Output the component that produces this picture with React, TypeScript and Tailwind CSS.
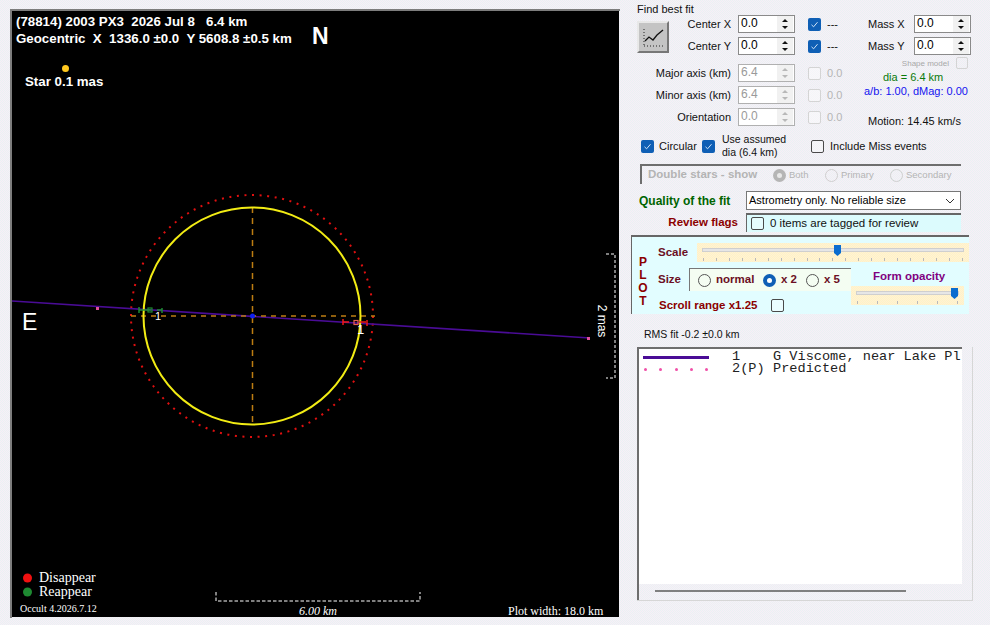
import type { ReactNode } from "react";

const SANS = "font-['Liberation_Sans',Arial,sans-serif]";
const SERIF = "font-['Liberation_Serif','Times_New_Roman',serif]";
const MONO = "font-['Liberation_Mono','Courier_New',monospace]";

function Check({ checked, disabled }: { checked?: boolean; disabled?: boolean }) {
  if (checked) {
    return (
      <span className="flex h-[13px] w-[13px] shrink-0 items-center justify-center rounded-[2px] bg-[#0f5fb5]">
        <svg width="9" height="9" viewBox="0 0 9 9" fill="none">
          <path d="M1.5 4.8 3.6 6.8 7.5 2.2" stroke="#cfe3f7" strokeWidth="1" />
        </svg>
      </span>
    );
  }
  return (
    <span
      className={`block h-[13px] w-[13px] shrink-0 rounded-[2px] border ${
        disabled ? "border-[#d4d4d4] bg-white/40" : "border-[#4a4a4a] bg-white/30"
      }`}
    />
  );
}

function Radio({ checked, disabled }: { checked?: boolean; disabled?: boolean }) {
  if (checked) {
    return (
      <span
        className={`flex h-[13px] w-[13px] shrink-0 items-center justify-center rounded-full ${
          disabled ? "bg-[#b5b5b5]" : "bg-[#0f5fb5]"
        }`}
      >
        <span className={`block h-[5px] w-[5px] rounded-full ${disabled ? "bg-[#e8e8e8]" : "bg-white"}`} />
      </span>
    );
  }
  return (
    <span
      className={`block h-[13px] w-[13px] shrink-0 rounded-full border ${
        disabled ? "border-[#cfcfcf]" : "border-[#555]"
      }`}
    />
  );
}

function Spin({ value, disabled }: { value: string; disabled?: boolean }) {
  const arrow = disabled ? "#b8b8b8" : "#111";
  return (
    <div
      className={`flex h-[18px] w-[57px] shrink-0 items-center justify-between border bg-white ${
        disabled ? "border-[#b0b0b0] bg-transparent text-[#9a9a9a]" : "border-[#8a8a8a] text-black"
      }`}
    >
      <span className="pb-[2px] pl-[2px] text-[12px] leading-none">{value}</span>
      <svg width="16" height="16" viewBox="0 0 16 16" className="mr-px">
        <rect x="0" y="0" width="16" height="8" fill="#f1f1f1" />
        <rect x="0" y="8" width="16" height="8" fill="#f1f1f1" />
        <path d="M5 6 8 3l3 3z" fill={arrow} />
        <path d="M5 10l3 3 3-3z" fill={arrow} />
      </svg>
    </div>
  );
}

function FitRow({ label, width, disabled, value, note }: { label: string; width: string; disabled?: boolean; value: string; note: string }) {
  return (
    <div className="flex h-[18px] items-center">
      <span className={`${width} whitespace-nowrap text-right`}>{label}</span>
      <span className="ml-[7px]">
        <Spin value={value} disabled={disabled} />
      </span>
      <span className="ml-[13px]">
        <Check checked={!disabled} disabled={disabled} />
      </span>
      <span className={`ml-[6px] ${disabled ? "text-[#b5b5b5]" : ""}`}>{note}</span>
    </div>
  );
}

function Slider({ pos, ticks, className }: { pos: string; ticks: number; className: string }) {
  return (
    <div className={`relative shrink-0 bg-[repeating-conic-gradient(#fff4c4_0_25%,#fff0d6_0_50%)] bg-[length:2px_2px] ${className}`}>
      <div className="absolute inset-x-[5px] top-[5px] h-[4px] border border-[#cfcfcf] bg-[#e6e6e6]" />
      <div className="absolute inset-x-[6px] bottom-[1px] flex justify-between">
        {Array.from({ length: ticks }).map((_, i) => (
          <span key={i} className="block h-[3px] w-px bg-[#b9b9b9]" />
        ))}
      </div>
      <svg width="7" height="11" viewBox="0 0 7 11" className={`absolute top-[2px] ${pos}`}>
        <path d="M0 0h7v8L3.5 11 0 8z" fill="#0a6ccf" />
      </svg>
    </div>
  );
}

function Label({ className, children }: { className: string; children: ReactNode }) {
  return <span className={`absolute whitespace-pre ${className}`}>{children}</span>;
}

function Plot() {
  return (
    <div className="mt-[9px] ml-[10px] h-[609px] w-[610px] shrink-0 border-t-2 border-l-2 border-[#7d7d7d]">
      <div className={`relative h-[606px] w-[607px] overflow-hidden bg-black text-white ${SANS}`}>
        <svg className="absolute inset-0" width="607" height="606" viewBox="12 11 607 606" fill="none">
          <circle cx="252" cy="316" r="121" stroke="#e01010" strokeWidth="2" strokeDasharray="2 5.6" />
          <line x1="12" y1="301" x2="590" y2="338" stroke="#4a0c96" strokeWidth="1.6" />
          <rect x="96" y="307" width="3" height="3" fill="#e0509a" />
          <rect x="587" y="337" width="3" height="3" fill="#e0509a" />
          <line x1="131" y1="316" x2="375" y2="316" stroke="#bd7d12" strokeWidth="1.5" strokeDasharray="5 5" />
          <line x1="252.5" y1="207" x2="252.5" y2="425" stroke="#bd7d12" strokeWidth="1.5" strokeDasharray="6 5" />
          <circle cx="252" cy="316" r="108.5" stroke="#f2ec14" strokeWidth="2" />
          <circle cx="252.5" cy="316" r="2.5" fill="#1020f0" />
          <circle cx="65.5" cy="68.5" r="3.5" fill="#ffc81e" />
          {/* green reappear marker */}
          <path d="M139 307v6M139 310h12M157 310h5M162 308v5" stroke="#1e8a32" strokeWidth="1.5" />
          <rect x="148" y="308" width="4" height="4" stroke="#1e8a32" strokeWidth="1.2" />
          {/* red disappear marker */}
          <path d="M343 319v6M343 322h6M359 322h7M367 320v6" stroke="#f01818" strokeWidth="1.5" />
          <rect x="354" y="320.5" width="4" height="4" stroke="#e86050" strokeWidth="1.2" />
          {/* 2 mas bracket */}
          <path d="M606 254h9v124h-9" stroke="#fff" strokeWidth="1" strokeDasharray="3 2" />
          {/* scale bar */}
          <path d="M216 592v9h204v-9" stroke="#fff" strokeWidth="1" strokeDasharray="3.5 2" />
          <circle cx="27.5" cy="578" r="4.5" fill="#f01010" />
          <circle cx="27.5" cy="592" r="4.5" fill="#1e8a32" />
        </svg>
        <div className="absolute top-[2px] left-[4px] text-[13.3px] leading-[17px] font-bold whitespace-pre">
          <div>(78814) 2003 PX3  2026 Jul 8   6.4 km</div>
          <div>Geocentric  X  1336.0 ±0.0  Y 5608.8 ±0.5 km</div>
        </div>
        <Label className="top-[12px] left-[300px] text-[23px] leading-[26px] font-bold">N</Label>
        <Label className="top-[63px] left-[13px] text-[13.3px] leading-[16px] font-bold">Star 0.1 mas</Label>
        <Label className="top-[298px] left-[10px] text-[23px] leading-[26px]">E</Label>
        <Label className="top-[299px] left-[143px] text-[11px] leading-[13px]">1</Label>
        <Label className="top-[312px] left-[345px] text-[13px] leading-[14px]">1</Label>
        <Label className="top-[303px] left-[574px] rotate-90 text-[12px] leading-[14px]">2 mas</Label>
        <Label className={`top-[559px] left-[27px] text-[14px] leading-[16px] ${SERIF}`}>Disappear</Label>
        <Label className={`top-[573px] left-[27px] text-[14px] leading-[16px] ${SERIF}`}>Reappear</Label>
        <Label className={`top-[592px] left-[8px] text-[10px] leading-[12px] ${SERIF}`}>Occult 4.2026.7.12</Label>
        <Label className={`top-[593px] left-[287px] text-[12px] leading-[14px] italic ${SERIF}`}>6.00 km</Label>
        <Label className={`top-[593px] left-[496px] text-[12px] leading-[14px] ${SERIF}`}>Plot width: 18.0 km</Label>
      </div>
    </div>
  );
}

function FitPanel() {
  return (
    <div className="flex h-[160px] flex-col pl-[6px] text-[11px] leading-[13px] text-[#111]">
      <div className="h-[15px] pt-[3px] leading-[12px]">Find best fit</div>
      <div className="flex">
        <div className="flex w-[224px] flex-col">
          <div className="flex">
            <div className="mt-[6px] flex h-[32px] w-[32px] shrink-0 items-center justify-center border-2 border-t-[#e8e8e8] border-r-[#777] border-b-[#777] border-l-[#e8e8e8] bg-[#c4c4c4]">
              <svg width="26" height="24" viewBox="0 0 26 24" fill="none">
                <path d="M4 4v17M4 21h20" stroke="#222" strokeDasharray="1 2" />
                <path d="M5 16l4-4 4 3 4-5 6-5" stroke="#111" strokeWidth="1.3" />
              </svg>
            </div>
            <div className="flex flex-col gap-[4px]">
              <FitRow label="Center X" width="w-[62px]" value="0.0" note="---" />
              <FitRow label="Center Y" width="w-[62px]" value="0.0" note="---" />
            </div>
          </div>
          <div className="mt-[9px] flex flex-col gap-[4px]">
            <FitRow label="Major axis (km)" width="w-[94px]" value="6.4" note="0.0" disabled />
            <FitRow label="Minor axis (km)" width="w-[94px]" value="6.4" note="0.0" disabled />
            <FitRow label="Orientation" width="w-[94px]" value="0.0" note="0.0" disabled />
          </div>
        </div>
        <div className="flex w-[110px] flex-col">
          <div className="flex flex-col gap-[4px] pl-[7px]">
            <div className="flex h-[18px] items-center justify-between">
              <span>Mass X</span>
              <Spin value="0.0" />
            </div>
            <div className="flex h-[18px] items-center justify-between">
              <span>Mass Y</span>
              <Spin value="0.0" />
            </div>
          </div>
          <div className="mt-[2px] flex h-[12px] items-center justify-end pr-[3px]">
            <span className="mr-[7px] text-[8px] text-[#a8a8a8]">Shape model</span>
            <span className="block h-[12px] w-[12px] rounded-[2px] border border-[#d4d4d4]" />
          </div>
          <div className="mt-[2px] pl-[22px] text-[#0a7a0a]">dia = 6.4 km</div>
          <div className="mt-px pl-[3px] text-[#1414f0]">a/b: 1.00, dMag: 0.00</div>
          <div className="mt-[17px] pl-[7px]">Motion: 14.45 km/s</div>
        </div>
      </div>
      <div className="mt-[5px] flex h-[26px] items-center pl-[4px]">
        <Check checked />
        <span className="ml-[5px] w-[43px]">Circular</span>
        <Check checked />
        <span className="ml-[7px] w-[89px] text-[10.5px] leading-[13px]">
          Use assumed
          <br />
          dia (6.4 km)
        </span>
        <Check />
        <span className="ml-[6px]">Include Miss events</span>
      </div>
    </div>
  );
}

function DoubleStars() {
  const opts = [
    { label: "Both", checked: true, w: "w-[52px]" },
    { label: "Primary", checked: false, w: "w-[65px]" },
    { label: "Secondary", checked: false, w: "" },
  ];
  return (
    <div className="mt-[4px] ml-[9px] flex h-[20px] w-[321px] items-center border-t-2 border-l-2 border-[#6e6e6e] pl-[6px] text-[#b4b4b4]">
      <span className="w-[125px] text-[11.5px] font-bold">Double stars - show</span>
      {opts.map((o) => (
        <span key={o.label} className={`flex items-center gap-[3px] text-[9.5px] ${o.w}`}>
          <Radio checked={o.checked} disabled />
          {o.label}
        </span>
      ))}
    </div>
  );
}

function PlotPanel() {
  return (
    <div className="mt-[3px] flex h-[79px] w-[338px] border-t-2 border-l border-[#666] bg-[#e2fdff] pt-[6px] font-bold">
      <div className="mt-[13px] w-[26px] pl-[5px] text-center text-[12px] leading-[13px] text-[#8b0000]">
        <div className="w-[12px]">P</div>
        <div className="w-[12px]">L</div>
        <div className="w-[12px]">O</div>
        <div className="w-[12px]">T</div>
      </div>
      <div className="flex flex-1 flex-col">
        <div className="flex items-center">
          <span className="w-[39px] text-[11.5px] text-[#6b0f24]">Scale</span>
          <Slider pos="left-[137px]" ticks={21} className="h-[19px] w-[272px]" />
        </div>
        <div className="flex">
          <div className="flex flex-col">
            <div className="mt-[6px] flex h-[23px] items-center">
              <span className="w-[31px] text-[11.5px] text-[#6b0f24]">Size</span>
              <div className="flex h-[23px] w-[162px] items-center border-t border-l border-[#777] bg-[#f4fdf2] pl-[8px] text-[11.5px] text-[#6b0f24]">
                <Radio />
                <span className="ml-[5px] w-[47px]">normal</span>
                <Radio checked />
                <span className="ml-[5px] w-[25px]">x 2</span>
                <Radio />
                <span className="ml-[5px]">x 5</span>
              </div>
            </div>
            <div className="mt-[6px] flex items-center pl-px">
              <span className="w-[112px] text-[11.5px] text-[#8b0000]">Scroll range x1.25</span>
              <Check />
            </div>
          </div>
          <div className="flex flex-col">
            <span className="mt-[6px] ml-[22px] h-[18px] text-[11.5px] text-[#800080]">Form opacity</span>
            <Slider pos="left-[100px]" ticks={6} className="h-[19px] w-[113px]" />
          </div>
        </div>
      </div>
    </div>
  );
}

export default function App() {
  return (
    <div className={`flex h-[625px] w-[990px] overflow-hidden bg-[repeating-conic-gradient(#f8eef7_0_25%,#e9f2f3_0_50%)] bg-[length:2px_2px] ${SANS}`}>
      <Plot />
      <div className="ml-[11px] flex w-[350px] shrink-0 flex-col">
        <FitPanel />
        <DoubleStars />
        <div className="mt-[7px] flex h-[19px] items-center pl-[8px]">
          <span className="w-[100px] text-[12px] font-bold whitespace-nowrap text-[#006400]">Quality of the fit</span>
          <div className="ml-[7px] flex h-[19px] w-[215px] items-center justify-between border border-[#777] bg-white pr-[5px] pl-[2px] text-[11px]">
            Astrometry only. No reliable size
            <svg width="10" height="6" viewBox="0 0 10 6" fill="none">
              <path d="M1 1l4 4 4-4" stroke="#333" />
            </svg>
          </div>
        </div>
        <div className="mt-[3px] flex h-[19px] items-center">
          <span className="w-[107px] pr-[0px] text-right text-[11.5px] font-bold whitespace-nowrap text-[#8b0000]">Review flags</span>
          <div className="ml-[8px] flex h-[19px] w-[215px] items-center border-t-2 border-l border-[#666] bg-[#dcfbfd] pl-[4px] text-[11.5px] text-[#111]">
            <Check />
            <span className="ml-[6px]">0 items are tagged for review</span>
          </div>
        </div>
        <PlotPanel />
        <div className="mt-[14px] ml-[13px] h-[13px] text-[10.5px] leading-[13px] text-[#111]">RMS fit -0.2 ±0.0 km</div>
        <div className="mt-[6px] ml-[6px] flex h-[254px] w-[336px] flex-col border-r border-b border-[#d6d6d6]">
          <div className={`h-[238px] w-[325px] overflow-hidden border-t-2 border-l-2 border-[#6e6e6e] bg-white pt-[2px] text-[13.6px] leading-[12px] text-[#222] ${MONO}`}>
            <div className="flex h-[12px] items-center">
              <span className="ml-[4px] block h-[3px] w-[66px] bg-[#4a0c96]" />
              <span className="ml-[23px] w-[41px]">1</span>
              <span className="whitespace-nowrap">G Viscome, near Lake Pl</span>
            </div>
            <div className="flex h-[12px] items-center">
              <span className="ml-[4px] flex w-[66px] justify-between px-px">
                <span className="block h-[3px] w-[3px] rounded-full bg-[#f050a8]" />
                <span className="block h-[3px] w-[3px] rounded-full bg-[#f050a8]" />
                <span className="block h-[3px] w-[3px] rounded-full bg-[#f050a8]" />
                <span className="block h-[3px] w-[3px] rounded-full bg-[#f050a8]" />
                <span className="block h-[3px] w-[3px] rounded-full bg-[#f050a8]" />
              </span>
              <span className="ml-[23px] w-[41px]">2(P)</span>
              <span>Predicted</span>
            </div>
          </div>
          <div className="flex h-[16px] border-l-2 border-[#6e6e6e] pt-[6px] pl-[16px]">
            <span className="block h-[2px] w-[251px] bg-[#808080]" />
          </div>
        </div>
      </div>
    </div>
  );
}
